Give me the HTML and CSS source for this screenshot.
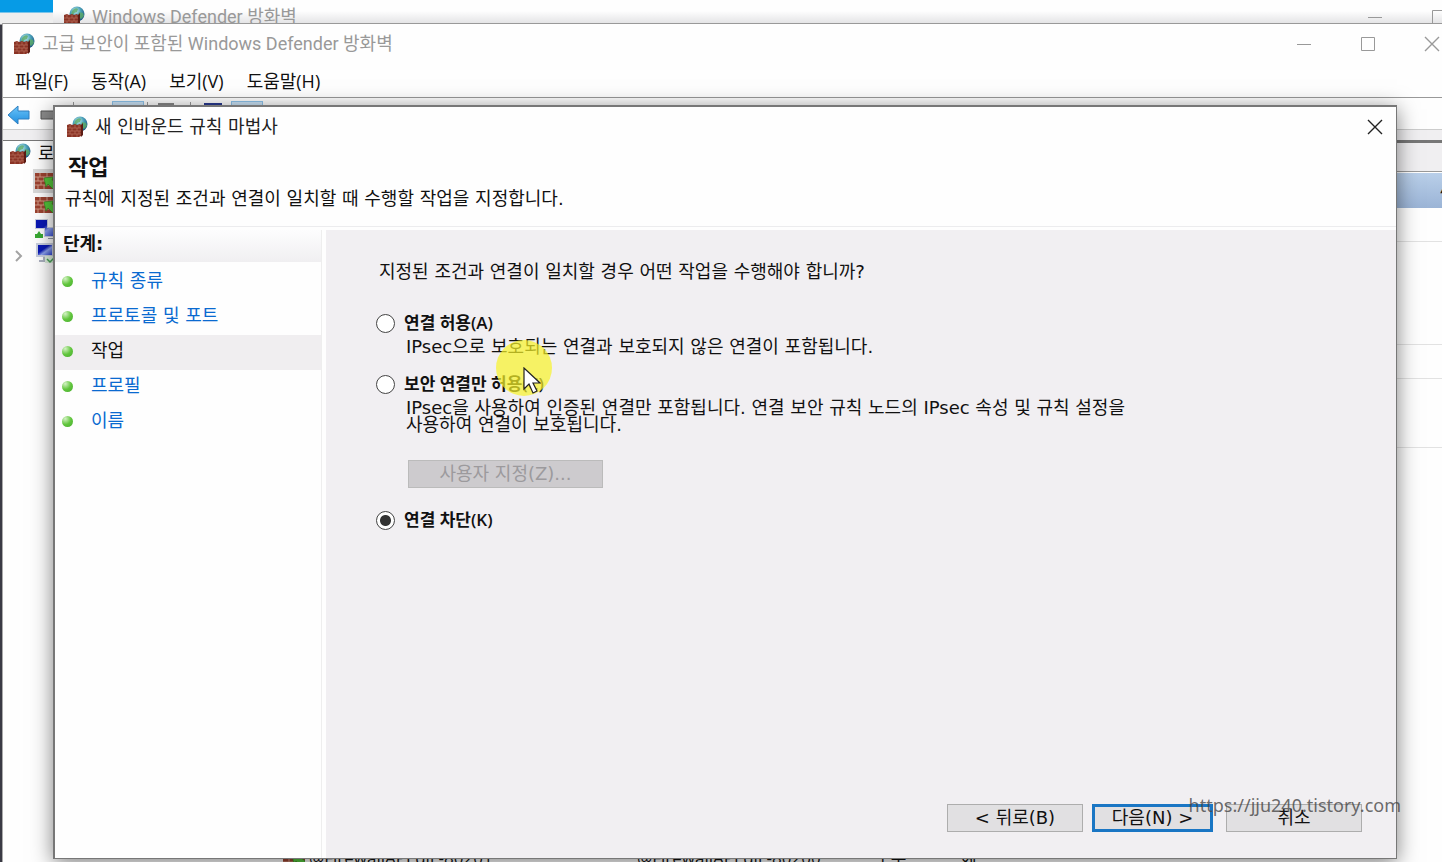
FILE: index.html
```html
<!DOCTYPE html>
<html lang="ko">
  <head>
    <meta charset="UTF-8" />
    <meta name="viewport" content="width=device-width, initial-scale=1.0" />
    <title>새 인바운드 규칙 마법사</title>
    <link rel="stylesheet" href="styles.css">
  </head>
  <body>
    <!-- shared icons -->
    <svg class="defs" width="0" height="0" aria-hidden="true">
      <defs>
        <radialGradient id="globeFill" cx="40%" cy="30%" r="70%">
          <stop offset="0" stop-color="#c4ecf0" />
          <stop offset="0.5" stop-color="#4aa0b8" />
          <stop offset="1" stop-color="#1d5684" />
        </radialGradient>
        <linearGradient id="screenFill" x1="0" y1="0" x2="1" y2="1">
          <stop offset="0.4" stop-color="#0a18b4" />
          <stop offset="0.6" stop-color="#8fa4ee" />
          <stop offset="1" stop-color="#2a3fd0" />
        </linearGradient>
        <linearGradient id="arrowFill" x1="0" y1="0" x2="0" y2="1">
          <stop offset="0" stop-color="#6cc4f8" />
          <stop offset="1" stop-color="#1f8ee0" />
        </linearGradient>
      </defs>
      <symbol id="wall" viewBox="0 0 22 22">
        <circle cx="14" cy="8" r="7.5" fill="url(#globeFill)" />
        <path d="M9 5q3-4 6-2l-1 3-3 1-1 3-2-1zM16 6l4 1 1 3-3 3-3-3z" fill="#5cab66" opacity="0.8" />
        <path d="M1 9l3-1 2 1 3-1 2 1 3-1 1 1v11l-2 1H1z" fill="#8a3325" />
        <path d="M1 12h14M1 15h14M1 18h14M4 9v3M9 9v3M13 9v3M6 12v3M11 12v3M4 15v3M9 15v3M13 15v3M6 18v3M11 18v3" stroke="#b8705c" stroke-width="0.7" />
        <path d="M15 9l2-2v12l-2 2z" fill="#5c1c14" />
      </symbol>
      <symbol id="rules" viewBox="0 0 22 18">
        <path d="M0 1h22v16H0z" fill="#9c4230" />
        <path d="M0 5h22M0 9h22M0 13h22M5 1v4M12 1v4M3 5v4M9 5v4M6 9v4M3 13v4M9 13v4" stroke="#d09a86" />
        <path d="M9 6l9-1-1 3 5 4v5h-4l-5-5-2 3z" fill="#55c83c" stroke="#2d8a22" stroke-width="0.6" />
      </symbol>
      <symbol id="computers" viewBox="0 0 22 22">
        <path d="M0 1h13v10H0zM9 9h13v10H9z" fill="#c9cfdf" />
        <path d="M1 2h11v8H1zM10 10h11v8H10z" fill="url(#screenFill)" />
        <path d="M13 20h6v1h-6z" fill="#8e96a8" />
        <path d="M0 20v-4h2l2-3 2 3h2v4z" fill="#38a832" />
      </symbol>
      <symbol id="monitor" viewBox="0 0 22 22">
        <path d="M1 1h18v14H1z" fill="#c9cfdf" />
        <path d="M3 3h14v10H3z" fill="url(#screenFill)" />
        <path d="M8 15h4v3h4v2H4v-2h4z" fill="#aab0bf" />
        <path d="M10 14h11v7H10z" fill="#dff0df" />
        <path d="M12 17l3 3 5-5" fill="none" stroke="#48a458" stroke-width="1.5" />
      </symbol>
      <symbol id="close" viewBox="0 0 16 16">
        <path d="M1 1l14 14M15 1L1 15" fill="none" stroke="currentColor" stroke-width="1.4" />
      </symbol>
      <symbol id="maximize" viewBox="0 0 16 16">
        <path d="M1.5 1.5h13v13h-13z" fill="none" stroke="currentColor" />
      </symbol>
      <symbol id="minimize" viewBox="0 0 16 16">
        <path d="M1 8.5h14" fill="none" stroke="currentColor" />
      </symbol>
    </svg>

    <div class="desktop">
      <section class="window window-back">
        <header class="titlebar">
          <svg class="app-icon"><use href="#wall" /></svg>
          <span class="title">Windows Defender 방화벽</span>
          <button class="caption" aria-label="최소화"><svg><use href="#minimize" /></svg></button>
          <button class="caption" aria-label="최대화"><svg><use href="#maximize" /></svg></button>
        </header>
      </section>

      <section class="window window-main">
        <header class="titlebar">
          <svg class="app-icon"><use href="#wall" /></svg>
          <span class="title">고급 보안이 포함된 Windows Defender 방화벽</span>
          <button class="caption" aria-label="최소화"><svg><use href="#minimize" /></svg></button>
          <button class="caption" aria-label="최대화"><svg><use href="#maximize" /></svg></button>
          <button class="caption" aria-label="닫기"><svg><use href="#close" /></svg></button>
        </header>
        <nav class="menubar">
          <button>파일(F)</button>
          <button>동작(A)</button>
          <button>보기(V)</button>
          <button>도움말(H)</button>
        </nav>
        <div class="toolbar">
          <button aria-label="뒤로">
            <svg width="24" height="20" viewBox="0 0 24 20"><path d="M1 10l10-9v5h11v8H11v5z" fill="url(#arrowFill)" stroke="#2f7fc0" /></svg>
          </button>
          <button aria-label="앞으로">
            <svg width="24" height="20" viewBox="0 0 24 20"><path d="M23 10L14 1v5H1v8h13v5z" fill="#8b8b8b" stroke="#555" /></svg>
          </button>
          <span class="tool-rule"></span>
          <span class="tool"></span>
          <span class="tool tool-on"></span>
          <span class="tool-rule"></span>
          <span class="tool tool-page"></span>
          <span class="tool-rule"></span>
          <span class="tool tool-blue"></span>
          <span class="tool tool-on"></span>
        </div>
        <div class="panes">
          <ul class="tree">
            <li class="tree-root"><svg class="app-icon"><use href="#wall" /></svg>로컬</li>
            <li class="tree-on"><svg><use href="#rules" /></svg></li>
            <li><svg><use href="#rules" /></svg></li>
            <li><svg><use href="#computers" /></svg></li>
            <li>
              <svg class="chevron" viewBox="0 0 10 14"><path d="M2 2l5 5-5 5" fill="none" stroke="#a3a3a3" stroke-width="2" /></svg>
              <svg><use href="#monitor" /></svg>
            </li>
          </ul>
          <div class="list">
            <div class="list-row">
              <svg><use href="#rules" /></svg>
              <span class="col-name">@FirewallAPI.dll,-80201</span>
              <span class="col-group">@FirewallAPI.dll,-80200</span>
              <span class="col-profile">모두</span>
              <span>예</span>
            </div>
          </div>
          <aside class="actions">
            <div class="actions-head"></div>
            <div class="actions-on">▲</div>
            <div class="actions-item"></div>
            <div class="actions-group"></div>
            <div class="actions-item"></div>
            <div class="actions-last"></div>
          </aside>
        </div>
      </section>

      <section class="window wizard" role="dialog" aria-labelledby="wizard-title">
        <header class="titlebar">
          <svg class="app-icon"><use href="#wall" /></svg>
          <span class="title" id="wizard-title">새 인바운드 규칙 마법사</span>
          <button class="caption" aria-label="닫기"><svg><use href="#close" /></svg></button>
        </header>
        <div class="intro">
          <h1>작업</h1>
          <p>규칙에 지정된 조건과 연결이 일치할 때 수행할 작업을 지정합니다.</p>
        </div>
        <div class="wizard-body">
          <nav class="steps">
            <h2>단계:</h2>
            <ul>
              <li><a href="#">규칙 종류</a></li>
              <li><a href="#">프로토콜 및 포트</a></li>
              <li class="current">작업</li>
              <li><a href="#">프로필</a></li>
              <li><a href="#">이름</a></li>
            </ul>
          </nav>
          <form class="page">
            <p class="question">지정된 조건과 연결이 일치할 경우 어떤 작업을 수행해야 합니까?</p>
            <div class="option">
              <input type="radio" name="action" id="allow">
              <label for="allow">연결 허용(A)</label>
              <p>IPsec으로 보호되는 연결과 보호되지 않은 연결이 포함됩니다.</p>
            </div>
            <div class="option option-secure">
              <input type="radio" name="action" id="secure">
              <label for="secure">보안 연결만 허용(C)</label>
              <p>IPsec을 사용하여 인증된 연결만 포함됩니다. 연결 보안 규칙 노드의 IPsec 속성 및 규칙 설정을<br>사용하여 연결이 보호됩니다.</p>
              <div class="pointer">
                <svg width="18" height="28" viewBox="0 0 18 28"><path d="M1 1v21l5-5 4 9 4-2-4-8h7z" fill="#fff" stroke="#222" stroke-width="1.2" /></svg>
              </div>
            </div>
            <button class="btn btn-custom" type="button" disabled>사용자 지정(Z)...</button>
            <div class="option">
              <input type="radio" name="action" id="block" checked>
              <label for="block">연결 차단(K)</label>
            </div>
            <footer class="buttons">
              <button class="btn" type="button">&lt; 뒤로(B)</button>
              <button class="btn btn-default" type="button">다음(N) &gt;</button>
              <button class="btn btn-cancel" type="button">취소</button>
            </footer>
          </form>
        </div>
      </section>

      <div class="watermark">https://jju240.tistory.com</div>
    </div>
  </body>
</html>
```

FILE: styles.css
```css
* {
  box-sizing: border-box;
}
body {
  margin: 0;
  font-family: "DejaVu Sans", "Noto Sans CJK KR", sans-serif;
  font-size: 18px;
  line-height: 24px;
  color: #111;
}
h1,
h2,
p,
ul {
  margin: 0;
  padding: 0;
}
ul {
  list-style: none;
}
button {
  font: inherit;
  color: inherit;
  padding: 0;
  border: none;
  background: none;
}
.defs {
  position: absolute;
}
.desktop {
  position: relative;
  height: 100vh;
  overflow: hidden;
  background: linear-gradient(#069be6 12px, #eee 13px, #eee 24px, #3a3a44 25px);
}

/* windows */
.window {
  position: absolute;
  display: flex;
  flex-direction: column;
  background: #fefefe;
}
.window-back {
  left: 53px;
  top: -3px;
  right: -29px;
  height: 60px;
  background: linear-gradient(#fefefe 14px, #e0e0e2 28px);
}
.window-main {
  left: 2px;
  top: 23px;
  right: -22px;
  bottom: -12px;
  border-top: 1px solid #999;
  border-left: 1px solid #aaa;
}
.wizard {
  left: 53px;
  top: 105px;
  right: 45px;
  bottom: 3px;
  border: 2px solid #777;
  border-width: 2px 1px 1px 2px;
  box-shadow: 0 4px 20px rgba(0, 0, 0, 0.5);
}
.titlebar {
  display: flex;
  align-items: center;
  flex: none;
  height: 40px;
  padding-left: 10px;
  color: #999;
  font-family: Roboto, "Noto Sans CJK KR", sans-serif;
}
.app-icon {
  flex: none;
  width: 22px;
  height: 22px;
  margin-right: 7px;
}
.title {
  flex: 1;
  white-space: nowrap;
}
.caption {
  width: 64px;
  height: 30px;
  text-align: center;
}
.caption svg {
  display: block;
  width: 16px;
  height: 16px;
  margin: auto;
}
.wizard .titlebar {
  color: #222;
  padding-left: 11px;
  font-family: inherit;
}
.wizard .caption {
  width: 42px;
}

/* console behind the wizard */
.menubar {
  display: flex;
  gap: 23px;
  height: 34px;
  padding-left: 12px;
  border-bottom: 1px solid #999;
  font-family: "Open Sans", "Noto Sans CJK KR", sans-serif;
}
.toolbar {
  display: flex;
  align-items: center;
  gap: 3px;
  height: 32px;
  padding: 3px 0 0 4px;
  border-bottom: 1px solid #ccc;
}
.toolbar button {
  width: 30px;
}
.toolbar svg {
  display: block;
}
.tool-rule {
  width: 1px;
  height: 26px;
  margin-right: 7px;
  background: #999;
}
.tool {
  width: 25px;
  height: 24px;
}
.tool-on {
  width: 32px;
  height: 28px;
  background: #cce4f7;
  border: 1px solid #8fc4ec;
}
.tool-page {
  width: 16px;
  margin-right: 13px;
  border: 2px solid #888;
}
.tool-blue {
  width: 18px;
  margin: 0 6px 0 3px;
  background: #2a3a90;
}
.panes {
  display: flex;
  flex: 1;
  border-top: 10px solid #f0eff1;
}
.tree {
  width: 260px;
  border-top: 1px solid #777;
}
.tree li {
  display: flex;
  align-items: center;
  justify-content: flex-end;
  width: 54px;
  height: 24px;
}
.tree li svg {
  flex: none;
  width: 22px;
  height: 22px;
}
.tree .tree-root {
  justify-content: flex-start;
  width: auto;
  height: 28px;
  padding: 0 0 2px 6px;
}
.tree-on {
  background: linear-gradient(90deg, transparent 30px, #d9d9d9 30px);
}
.tree li .chevron {
  width: 10px;
  height: 14px;
  margin: 6px 11px 0 0;
}
.list {
  display: flex;
  flex: 1;
  flex-direction: column;
  justify-content: flex-end;
  border-top: 3px solid #777;
}
.list-row {
  display: flex;
  align-items: center;
  height: 32px;
  padding-left: 20px;
  font-family: "Open Sans", "Noto Sans CJK KR", sans-serif;
  font-size: 17px;
}
.list-row svg {
  width: 22px;
  height: 18px;
  margin-right: 4px;
}
.col-name {
  width: 328px;
}
.col-group {
  width: 238px;
}
.col-profile {
  width: 86px;
}
.actions {
  width: 160px;
  border-top: 3px solid #777;
}
.actions-head {
  height: 29px;
  background: #f0eff1;
  border-bottom: 1px solid #999;
}
.actions-on {
  height: 36px;
  padding-right: 10px;
  background: linear-gradient(#b9cfe9, #9bb4d6);
  border-top: 1px solid #fff;
  text-align: right;
}
.actions-item {
  height: 34px;
  border-bottom: 1px solid #e2e2e2;
}
.actions-group {
  height: 103px;
  border-bottom: 1px solid #e2e2e2;
}
.actions-last {
  height: 69px;
  border-bottom: 1px solid #e2e2e2;
}

/* wizard */
.intro {
  height: 80px;
  padding: 8px 10px;
  border-bottom: 1px solid #ececee;
}
.intro h1 {
  padding-left: 3px;
  font-size: 22px;
  line-height: 26px;
}
.intro p {
  margin-top: 6px;
}
.wizard-body {
  display: flex;
  flex: 1;
  padding-top: 3px;
}
.steps {
  flex: none;
  width: 267px;
  margin-right: 4px;
  border-right: 1px solid #eee;
}
.steps h2 {
  height: 32px;
  padding-left: 8px;
  background: linear-gradient(#fdfdfe, #f0eff1);
  font-size: 18px;
  line-height: 28px;
}
.steps li {
  display: flex;
  align-items: center;
  height: 35px;
  padding: 0 0 3px 7px;
}
.steps li::before {
  content: "";
  width: 11px;
  height: 11px;
  margin-right: 18px;
  border-radius: 50%;
  background: radial-gradient(circle at 30% 25%, #d4f2c4, #62c63e 50%, #45ac2c);
}
.steps ul {
  padding-top: 3px;
}
.steps a {
  color: #0a6ad0;
  text-decoration: none;
}
.steps .current {
  background: #f0eef0;
}
.page {
  display: flex;
  flex: 1;
  flex-direction: column;
  padding: 30px 34px 26px 50px;
  background: #f1eff2;
}
.question {
  margin-bottom: 27px;
  padding-left: 3px;
}
.option {
  display: grid;
  position: relative;
  grid-template-columns: 28px 1fr;
  align-items: center;
  margin-bottom: 13px;
}
.option input {
  appearance: none;
  width: 19px;
  height: 19px;
  margin: 0;
  border: 1px solid #444;
  border-radius: 50%;
  background: #fff;
}
.option input:checked {
  background: radial-gradient(circle, #333 5px, #fff 6px);
}
.option label {
  justify-self: start;
  font-family: "Open Sans", "Noto Sans CJK KR", sans-serif;
  font-size: 17px;
  font-weight: 600;
}
.option p {
  grid-column: 2;
  padding-left: 2px;
}
.option-secure p {
  padding-top: 3px;
  line-height: 17px;
}
/* mouse pointer with its highlight */
.pointer {
  position: absolute;
  left: 120px;
  top: -32px;
  width: 56px;
  height: 56px;
  padding: 27px 0 0 27px;
  border-radius: 50%;
  background: rgba(248, 244, 40, 0.7);
}
.btn {
  height: 28px;
  background: #e1e0e2;
  border: 1px solid #adadad;
  line-height: 24px;
  width: 136px;
}
.btn-custom {
  width: 195px;
  margin: 14px 0 20px 32px;
  background: #cdcbce;
  border-color: #bbb;
  color: #9c9a9d;
}
.btn-default {
  width: 121px;
  margin: 0 13px 0 9px;
  border: 3px solid #1a76c4;
  line-height: 20px;
}
.buttons {
  display: flex;
  justify-content: flex-end;
  margin-top: auto;
}
.watermark {
  position: absolute;
  right: 41px;
  bottom: 45px;
  color: rgba(70, 70, 70, 0.8);
  font-family: "Noto Sans", sans-serif;
}
```
